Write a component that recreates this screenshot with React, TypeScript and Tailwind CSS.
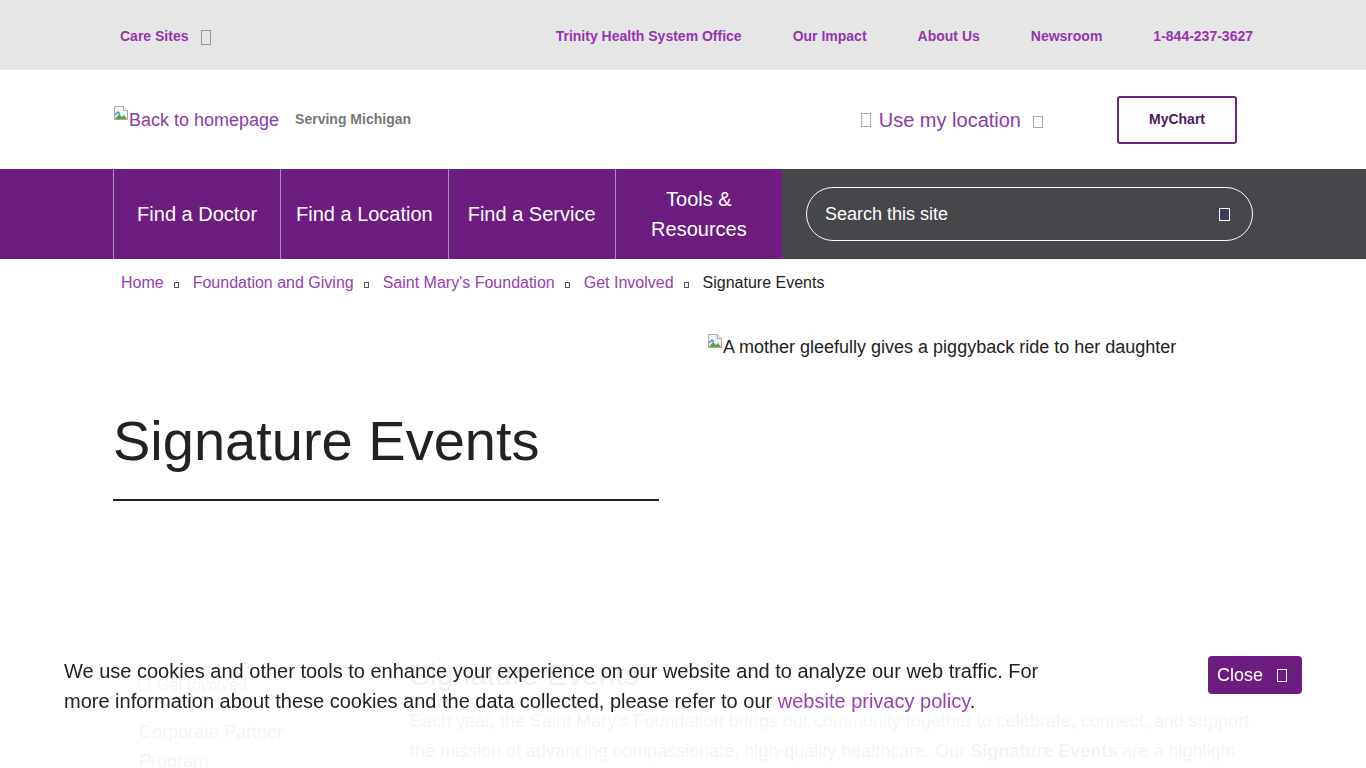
import React from 'react';

const Tofu = ({ className = '' }: { className?: string }) => (
  <span className={`inline-block border ${className}`} />
);

const BrokenImage = () => (
  <svg width="16" height="16" viewBox="0 0 16 16" className="shrink-0">
    <path d="M1.5 1.5h9l4 4v9h-13z" fill="#f4f4f4" stroke="#a8a8a8" />
    <path d="M10.5 1.5v4h4" fill="#fff" stroke="#a8a8a8" />
    <path d="M2 14l4-5 3 3 2-2 3 4z" fill="#5aa33f" />
    <path d="M2 10l3-3 2 2" fill="none" stroke="#4d8fd6" strokeWidth="1.5" />
  </svg>
);

const topLinks = ['Trinity Health System Office', 'Our Impact', 'About Us', 'Newsroom', '1-844-237-3627'];
const navItems = ['Find a Doctor', 'Find a Location', 'Find a Service', 'Tools & Resources'];
const crumbs = ['Home', 'Foundation and Giving', "Saint Mary's Foundation", 'Get Involved'];

export default function App() {
  return (
    <div className="h-screen overflow-hidden bg-white font-['Liberation_Sans',Arial,sans-serif] text-[#222]">
      {/* utility bar */}
      <div className="h-[70px] bg-[#e6e6e6]">
        <div className="mx-auto flex h-full w-[1140px] items-center justify-between pt-[3px]">
          <a className="flex items-center pl-[7px] text-[14px] font-bold text-[#9633b1]">
            Care Sites
            <Tofu className="ml-[13px] mt-[1px] h-[15px] w-[10px] border-[#a58aae]" />
          </a>
          <nav className="flex items-center gap-[51px] text-[14px] font-bold text-[#9633b1]">
            {topLinks.map((l) => (
              <a key={l}>{l}</a>
            ))}
          </nav>
        </div>
      </div>

      {/* header */}
      <div className="h-[99px]">
        <div className="mx-auto flex h-full w-[1140px] items-center justify-between">
          <div className="flex items-center">
            <a className="flex items-start text-[18px] leading-[22px] text-[#8f3aa9]">
              <span className="-mt-[4px]">
                <BrokenImage />
              </span>
              Back to homepage
            </a>
            <span className="ml-4 text-[14px] font-bold text-[#777]">Serving Michigan</span>
          </div>
          <div className="flex items-center pr-4">
            <button className="flex items-center text-[20px] text-[#8f3aa9]">
              <Tofu className="h-[14px] w-[10px] border-[#aaa]" />
              <span className="ml-2">Use my location</span>
              <Tofu className="ml-[12px] mt-[4px] h-[12px] w-[10px] border-[#aaa]" />
            </button>
            <a className="ml-[74px] flex h-[48px] w-[120px] items-center justify-center rounded-[3px] border-2 border-[#6b2480] text-[14px] font-bold text-[#4b1a5c]">
              MyChart
            </a>
          </div>
        </div>
      </div>

      {/* main nav */}
      <div className="h-[90px] bg-[linear-gradient(to_right,#6c1d7f_782px,#46474a_782px)]">
        <div className="mx-auto flex h-full w-[1140px]">
          <div className="grid h-full w-[669px] grid-cols-4">
            {navItems.map((n) => (
              <a
                key={n}
                className="flex items-center justify-center border-l border-[#b48fc0] px-3 text-center text-[20px] leading-[30px] text-white"
              >
                {n}
              </a>
            ))}
          </div>
          <div className="flex flex-1 items-center pl-6">
            <div className="flex h-[54px] w-full items-center justify-between rounded-full border border-white pl-[18px] pr-[22px]">
              <span className="text-[18px] text-white">Search this site</span>
              <Tofu className="h-[13px] w-[11px] border-white bg-[#3b3c5c]" />
            </div>
          </div>
        </div>
      </div>

      {/* breadcrumb */}
      <div className="mx-auto w-[1140px] pl-2 pt-[12px] text-[16px] leading-6">
        <div className="flex items-center">
          {crumbs.map((c) => (
            <React.Fragment key={c}>
              <a className="text-[#953fb0]">{c}</a>
              <Tofu className="ml-[10px] mr-[14px] mt-[4px] h-[6px] w-[5px] border-[#555]" />
            </React.Fragment>
          ))}
          <span className="text-[#222]">Signature Events</span>
        </div>
      </div>

      {/* hero */}
      <div className="mx-auto mt-[38px] grid h-[300px] w-[1140px] grid-cols-2 gap-12">
        <div>
          <h1 className="mt-[74px] text-[56px] leading-[1.2] text-[#222]">Signature Events</h1>
          <div className="mt-[25px] h-[2px] bg-[#222]" />
        </div>
        <div className="flex items-start">
          <BrokenImage />
          <span className="pt-[3px] text-[18px] leading-[22px] text-[#222]">
            A mother gleefully gives a piggyback ride to her daughter
          </span>
        </div>
      </div>

      {/* body content */}
      <div className="mx-auto grid w-[1140px] grid-cols-[273px_1fr] gap-6 pt-[22px]">
        <aside className="pl-[26px] pt-[18px]">
          <div className="flex items-center text-[16px] leading-6 text-[#888]">
            <Tofu className="mr-2 h-[12px] w-[10px] border-[#888]" />
            Get Involved
          </div>
          <div className="mt-[21px] w-[200px] text-[18px] leading-[29px] text-[#888]">Corporate Partner Program</div>
        </aside>
        <main>
          <h2 className="text-[30px] leading-[40px] text-[#666]">Signature Events</h2>
          <p className="mt-[11px] text-[18px] leading-[30px] text-[#888]">
            Each year, the Saint Mary's Foundation brings our community together to celebrate, connect, and support
            the mission of advancing compassionate, high-quality healthcare. Our <strong>Signature Events</strong> are a
            highlight of the year and make a lasting difference for patients and families.
          </p>
        </main>
      </div>

      {/* cookie notice */}
      <div className="fixed inset-x-0 bottom-0 h-[128px] bg-white/90">
        <div className="flex items-start justify-between px-16 pt-4">
          <p className="max-w-[1000px] text-[20px] leading-[30px] text-[#222]">
            We use cookies and other tools to enhance your experience on our website and to analyze our web traffic. For
            more information about these cookies and the data collected, please refer to our{' '}
            <a className="text-[#9b3fb5]">website privacy policy</a>.
          </p>
          <button className="flex h-[38px] w-[94px] items-center rounded-[4px] bg-[#6c1d7f] pl-[9px] text-[18px] text-white">
            Close
            <Tofu className="ml-[14px] h-[13px] w-[10px] border-white" />
          </button>
        </div>
      </div>
    </div>
  );
}
